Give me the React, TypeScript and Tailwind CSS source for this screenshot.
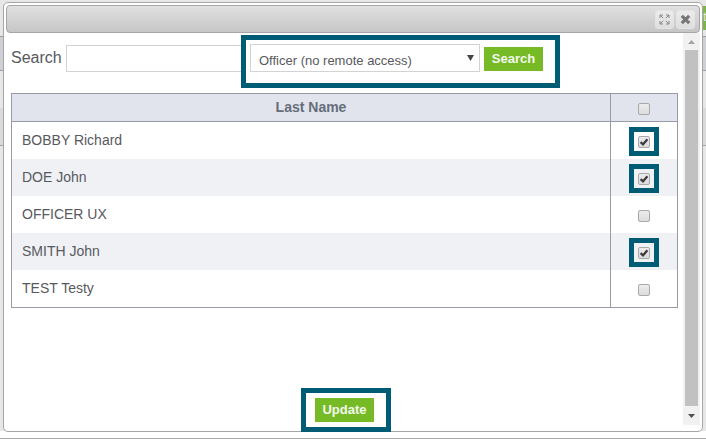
import { useState } from "react";

type Person = { name: string; selected: boolean };

const people: Person[] = [
  { name: "BOBBY Richard", selected: true },
  { name: "DOE John", selected: true },
  { name: "OFFICER UX", selected: false },
  { name: "SMITH John", selected: true },
  { name: "TEST Testy", selected: false },
];

function Tick({ label, checked, onChange }: { label: string; checked: boolean; onChange: () => void }) {
  return (
    <label className="grid size-3">
      <input
        type="checkbox"
        aria-label={label}
        checked={checked}
        onChange={onChange}
        className="col-start-1 row-start-1 size-3 appearance-none rounded-[2px] border border-[#a9a9a9] bg-linear-to-b from-[#ececec] to-[#dcdcdc]"
      />
      {checked && (
        <svg viewBox="0 0 12 12" className="pointer-events-none col-start-1 row-start-1 size-3" aria-hidden="true">
          <path d="M2.6 6.2 5 8.4 9.4 3.2" fill="none" stroke="#3c3c3c" strokeWidth="2.3" />
        </svg>
      )}
    </label>
  );
}

/* The page behind the dialog, seen only along its edges */
function Backdrop() {
  return (
    <div className="absolute inset-x-0 top-0 bottom-[7px] flex flex-col bg-[#e7e7e7]" aria-hidden="true">
      <div className="flex h-9 justify-end pt-1.5">
        <div className="h-6 w-[3px] overflow-hidden bg-[#7eb54a] text-[13px] leading-[22px] text-[#dfe8d6]">t</div>
      </div>
      <div className="h-[35px] border-y border-[#9b9da6] bg-[#cfd0d5]" />
      <div className="h-[37px]" />
      <div className="h-[38px] border-b border-[#a5a5ab] bg-[#dadada]" />
    </div>
  );
}

export default function App() {
  const [rows, setRows] = useState(people);
  const all = rows.every((r) => r.selected);

  return (
    <div className="relative flex min-h-screen flex-col border-b border-[#a9a9a9] bg-white px-[3px] pt-0.5 pb-1.5 font-['Liberation_Sans',Arial,sans-serif] text-[#58595e]">
      <Backdrop />
      <div role="dialog" aria-label="Select users" className="relative flex flex-1 flex-col rounded-[5px] border border-[#a6a6a6] bg-white p-0.5">
        <header className="flex h-7 items-center justify-end gap-0.5 rounded-[4px] border border-[#a6a6a6] bg-linear-to-b from-[#e0e0e0] to-[#c6c6c6] pr-1">
          <button type="button" aria-label="Expand" className="flex size-[19px] items-center justify-center rounded-[3px] border border-[#e4e4e4] bg-linear-to-b from-[#ececec] to-[#dedede]">
            <svg viewBox="0 0 11 11" className="size-[11px]" aria-hidden="true">
              <path d="M1 4V1h3M7 1h3v3M10 7v3H7M4 10H1V7M1 1l3.2 3.2M10 1 6.8 4.2M10 10 6.8 6.8M1 10l3.2-3.2" fill="none" stroke="#868686" />
            </svg>
          </button>
          <button type="button" aria-label="Close" className="flex size-[19px] items-center justify-center rounded-[3px] border border-[#e4e4e4] bg-linear-to-b from-[#ececec] to-[#dedede]">
            <svg viewBox="0 0 11 11" className="size-[11px]" aria-hidden="true">
              <path d="M1.8 1.8 9.2 9.2M9.2 1.8 1.8 9.2" fill="none" stroke="#777" strokeWidth="3.2" />
            </svg>
          </button>
        </header>

        <div className="flex flex-1 pb-1">
          <main className="flex flex-1 flex-col px-[5px] pb-[3px]">
            <form className="flex items-end gap-1 pt-[11px]" onSubmit={(e) => e.preventDefault()}>
              <label htmlFor="search" className="w-[51px] text-[16px] leading-7">Search</label>
              <input id="search" type="text" className="h-[27px] w-[180px] border border-[#d3d3d3] bg-white px-2 text-[14px]" />
              <div className="relative flex items-end gap-1">
                <div className="grid items-center">
                  <select aria-label="Access type" className="col-start-1 row-start-1 h-7 w-[230px] appearance-none border border-[#d3d3d3] bg-white pt-1.5 pr-6 pl-2 text-[13px]">
                    <option>Officer (no remote access)</option>
                  </select>
                  <svg viewBox="0 0 7 6" className="pointer-events-none col-start-1 row-start-1 mr-1.5 h-1.5 w-[7px] justify-self-end" aria-hidden="true">
                    <path d="M0 0h7L3.5 6z" fill="#454545" />
                  </svg>
                </div>
                <button type="submit" className="mb-px h-6 w-[59px] bg-[#76bb26] text-[13px] font-bold text-[#f4f8ee]">Search</button>
                <div className="pointer-events-none absolute -top-[9px] -right-[17px] -bottom-4 -left-[9px] border-5 border-[#005b75]" />
              </div>
            </form>

            <table className="mt-[21px] w-full table-fixed border-collapse border border-[#979ba5]">
              <colgroup>
                <col />
                <col className="w-[67px]" />
              </colgroup>
              <thead>
                <tr className="h-7 border-b border-[#979ba5] bg-[#e1e4ec]">
                  <th scope="col" className="border-r border-[#979ba5] text-[14px] font-bold text-[#656d7b]">Last Name</th>
                  <th scope="col" className="pt-0.5">
                    <div className="flex justify-center">
                      <Tick label="Select all" checked={all} onChange={() => setRows(rows.map((r) => ({ ...r, selected: !all })))} />
                    </div>
                  </th>
                </tr>
              </thead>
              <tbody>
                {rows.map((row, i) => (
                  <tr key={row.name} className="h-[37px] last:h-[38px] even:bg-[#eff1f5]">
                    <td className="border-r border-[#979ba5] pl-2.5 text-[14px]">{row.name}</td>
                    <td className="pt-[3px]">
                      <div className="flex justify-center">
                        <div className={row.selected ? "border-5 border-[#005b75] px-1 pt-1 pb-[3px]" : ""}>
                          <Tick
                            label={row.name}
                            checked={row.selected}
                            onChange={() => setRows(rows.map((r, j) => (j === i ? { ...r, selected: !r.selected } : r)))}
                          />
                        </div>
                      </div>
                    </td>
                  </tr>
                ))}
              </tbody>
            </table>

            <div className="mt-auto flex justify-center">
              <div className="relative">
                <button type="button" className="block h-6 w-[59px] bg-[#76bb26] text-[13px] font-bold text-[#f4f8ee]">Update</button>
                <div className="pointer-events-none absolute -top-2.5 -right-[17px] -bottom-2.5 -left-3.5 border-5 border-[#005b75]" />
              </div>
            </div>
          </main>

          <div className="flex w-[17px] flex-col items-center bg-[#f1f1f1]" aria-hidden="true">
            <div className="flex h-[17px] items-center justify-center">
              <svg viewBox="0 0 7 4" className="h-1 w-[7px]"><path d="M0 4h7L3.5 0z" fill="#a3a3a3" /></svg>
            </div>
            <div className="w-[13px] flex-1 bg-[#c1c1c1]" />
            <div className="flex h-[19px] items-center justify-center">
              <svg viewBox="0 0 7 4" className="h-1 w-[7px]"><path d="M0 0h7L3.5 4z" fill="#505050" /></svg>
            </div>
          </div>
        </div>
      </div>
    </div>
  );
}
